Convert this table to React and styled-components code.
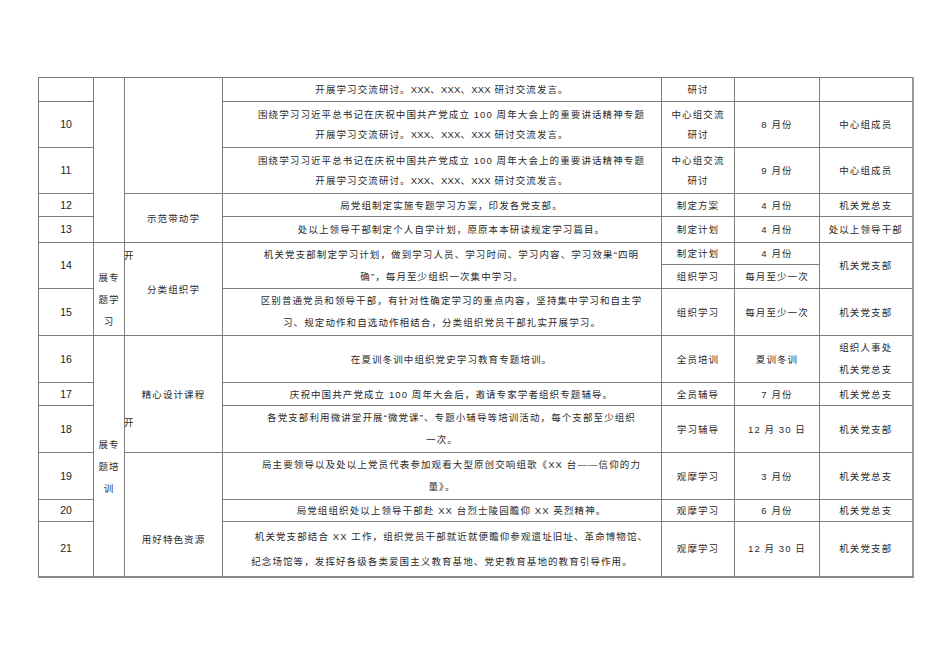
import React from "react";
import styled, { createGlobalStyle } from "styled-components";

const GlobalStyle = createGlobalStyle`
  html, body {
    margin: 0;
    padding: 0;
    background: #ffffff;
  }
  body {
    font-family: "Liberation Sans", "Noto Sans CJK SC", sans-serif;
  }
`;

const Page = styled.div`
  width: 950px;
  height: 672px;
  padding: 77px 0 0 38px;
  box-sizing: border-box;
  background: #fff;
`;

const Table = styled.table`
  border-collapse: collapse;
  table-layout: fixed;
  width: 874px;
  color: #2a2a2a;
  font-family: "Liberation Sans", "Noto Sans CJK SC", sans-serif;
  font-size: 9.5px;
  letter-spacing: 1.1px;
  border-right: 2px solid #9a9a9a;
  border-bottom: 2px solid #8a8a8a;
`;

const Row = styled.tr`
  height: ${(p) => p.$h}px;
`;

const Cell = styled.td`
  border: 1px solid #7c7c7c;
  padding: ${(p) => p.$pt || 0}px 4px 0 4px;
  text-align: center;
  vertical-align: middle;
  line-height: ${(p) => p.$lh || 21}px;
  white-space: nowrap;
  overflow: visible;
`;

const NumCell = styled(Cell)`
  font-size: 10.5px;
  letter-spacing: 0;
  color: #222;
`;

const TextCell = styled(Cell)`
  text-indent: ${(p) => (p.$noIndent ? 0 : 19)}px;
`;

const Latin = styled.span`
  letter-spacing: 0.2px;
`;

const SideCell = styled(Cell)`
  white-space: normal;
  padding: 0 3px;
  text-indent: 27px;
  line-height: 22px;
  word-break: break-all;
`;

const X3 = () => <Latin>XXX</Latin>;

const rows = [
  { h: 24, num: "", text: <>开展学习交流研讨。<X3 />、<X3 />、<X3 /> 研讨交流发言。</>, noIndent: true, way: "研讨", time: "", who: "" },
  {
    h: 46, num: "10", lh: 20,
    text: ["围绕学习习近平总书记在庆祝中国共产党成立 100 周年大会上的重要讲话精神专题", <>开展学习交流研讨。<X3 />、<X3 />、<X3 /> 研讨交流发言。</>],
    way: ["中心组交流", "研讨"], time: "8 月份", who: "中心组成员",
  },
  {
    h: 46, num: "11", lh: 20,
    text: ["围绕学习习近平总书记在庆祝中国共产党成立 100 周年大会上的重要讲话精神专题", <>开展学习交流研讨。<X3 />、<X3 />、<X3 /> 研讨交流发言。</>],
    way: ["中心组交流", "研讨"], time: "9 月份", who: "中心组成员",
  },
  { h: 23, num: "12", text: "局党组制定实施专题学习方案，印发各党支部。", way: "制定方案", time: "4 月份", who: "机关党总支" },
  { h: 26, num: "13", text: "处以上领导干部制定个人自学计划，原原本本研读规定学习篇目。", way: "制定计划", time: "4 月份", who: "处以上领导干部" },
];

function Lines({ value }) {
  if (!Array.isArray(value)) return value;
  return value.map((line, i) => (
    <React.Fragment key={i}>
      {i > 0 && <br />}
      {line}
    </React.Fragment>
  ));
}

export default function App() {
  return (
    <Page>
      <GlobalStyle />
      <Table>
        <colgroup>
          <col style={{ width: 55 }} />
          <col style={{ width: 31 }} />
          <col style={{ width: 98 }} />
          <col style={{ width: 439 }} />
          <col style={{ width: 73 }} />
          <col style={{ width: 85 }} />
          <col style={{ width: 93 }} />
        </colgroup>
        <tbody>
          {rows.map((r, i) => (
            <Row $h={r.h} key={i}>
              <NumCell>{r.num}</NumCell>
              {i === 0 && <SideCell rowSpan={5} />}
              {i === 0 && <Cell rowSpan={3} />}
              {i === 3 && <Cell rowSpan={2}>示范带动学</Cell>}
              <TextCell $lh={r.lh} $noIndent={r.noIndent}>
                <Lines value={r.text} />
              </TextCell>
              <Cell $lh={r.lh}>
                <Lines value={r.way} />
              </Cell>
              <Cell>{r.time}</Cell>
              <Cell>{r.who}</Cell>
            </Row>
          ))}

          <Row $h={21}>
            <NumCell rowSpan={2}>14</NumCell>
            <SideCell rowSpan={3}>开展专题学习</SideCell>
            <Cell rowSpan={3}>分类组织学</Cell>
            <TextCell rowSpan={2} $lh={22}>
              机关党支部制定学习计划，做到学习人员、学习时间、学习内容、学习效果“四明
              <br />
              确”，每月至少组织一次集中学习。
            </TextCell>
            <Cell>制定计划</Cell>
            <Cell>4 月份</Cell>
            <Cell rowSpan={2}>机关党支部</Cell>
          </Row>
          <Row $h={24}>
            <Cell>组织学习</Cell>
            <Cell>每月至少一次</Cell>
          </Row>
          <Row $h={47}>
            <NumCell>15</NumCell>
            <TextCell $lh={22}>
              区别普通党员和领导干部，有针对性确定学习的重点内容，坚持集中学习和自主学
              <br />
              习、规定动作和自选动作相结合，分类组织党员干部扎实开展学习。
            </TextCell>
            <Cell>组织学习</Cell>
            <Cell>每月至少一次</Cell>
            <Cell>机关党支部</Cell>
          </Row>

          <Row $h={47}>
            <NumCell>16</NumCell>
            <SideCell rowSpan={6}>开展专题培训</SideCell>
            <Cell rowSpan={3}>精心设计课程</Cell>
            <TextCell>在夏训冬训中组织党史学习教育专题培训。</TextCell>
            <Cell>全员培训</Cell>
            <Cell>夏训冬训</Cell>
            <Cell $lh={22}>
              组织人事处
              <br />
              机关党总支
            </Cell>
          </Row>
          <Row $h={23}>
            <NumCell>17</NumCell>
            <TextCell>庆祝中国共产党成立 100 周年大会后，邀请专家学者组织专题辅导。</TextCell>
            <Cell>全员辅导</Cell>
            <Cell>7 月份</Cell>
            <Cell>机关党总支</Cell>
          </Row>
          <Row $h={47}>
            <NumCell>18</NumCell>
            <TextCell $lh={22}>
              各党支部利用微讲堂开展“微党课”、专题小辅导等培训活动，每个支部至少组织
              <br />
              一次。
            </TextCell>
            <Cell>学习辅导</Cell>
            <Cell>12 月 30 日</Cell>
            <Cell>机关党支部</Cell>
          </Row>
          <Row $h={47}>
            <NumCell>19</NumCell>
            <Cell rowSpan={3} $pt={50}>用好特色资源</Cell>
            <TextCell $lh={22}>
              局主要领导以及处以上党员代表参加观看大型原创交响组歌《XX 台——信仰的力
              <br />
              量》。
            </TextCell>
            <Cell>观摩学习</Cell>
            <Cell>3 月份</Cell>
            <Cell>机关党总支</Cell>
          </Row>
          <Row $h={22}>
            <NumCell>20</NumCell>
            <TextCell>局党组组织处以上领导干部赴 XX 台烈士陵园瞻仰 XX 英烈精神。</TextCell>
            <Cell>观摩学习</Cell>
            <Cell>6 月份</Cell>
            <Cell>机关党总支</Cell>
          </Row>
          <Row $h={55}>
            <NumCell>21</NumCell>
            <TextCell $lh={25}>
              机关党支部结合 XX 工作，组织党员干部就近就便瞻仰参观遗址旧址、革命博物馆、
              <br />
              纪念场馆等，发挥好各级各类爱国主义教育基地、党史教育基地的教育引导作用。
            </TextCell>
            <Cell>观摩学习</Cell>
            <Cell>12 月 30 日</Cell>
            <Cell>机关党支部</Cell>
          </Row>
        </tbody>
      </Table>
    </Page>
  );
}
